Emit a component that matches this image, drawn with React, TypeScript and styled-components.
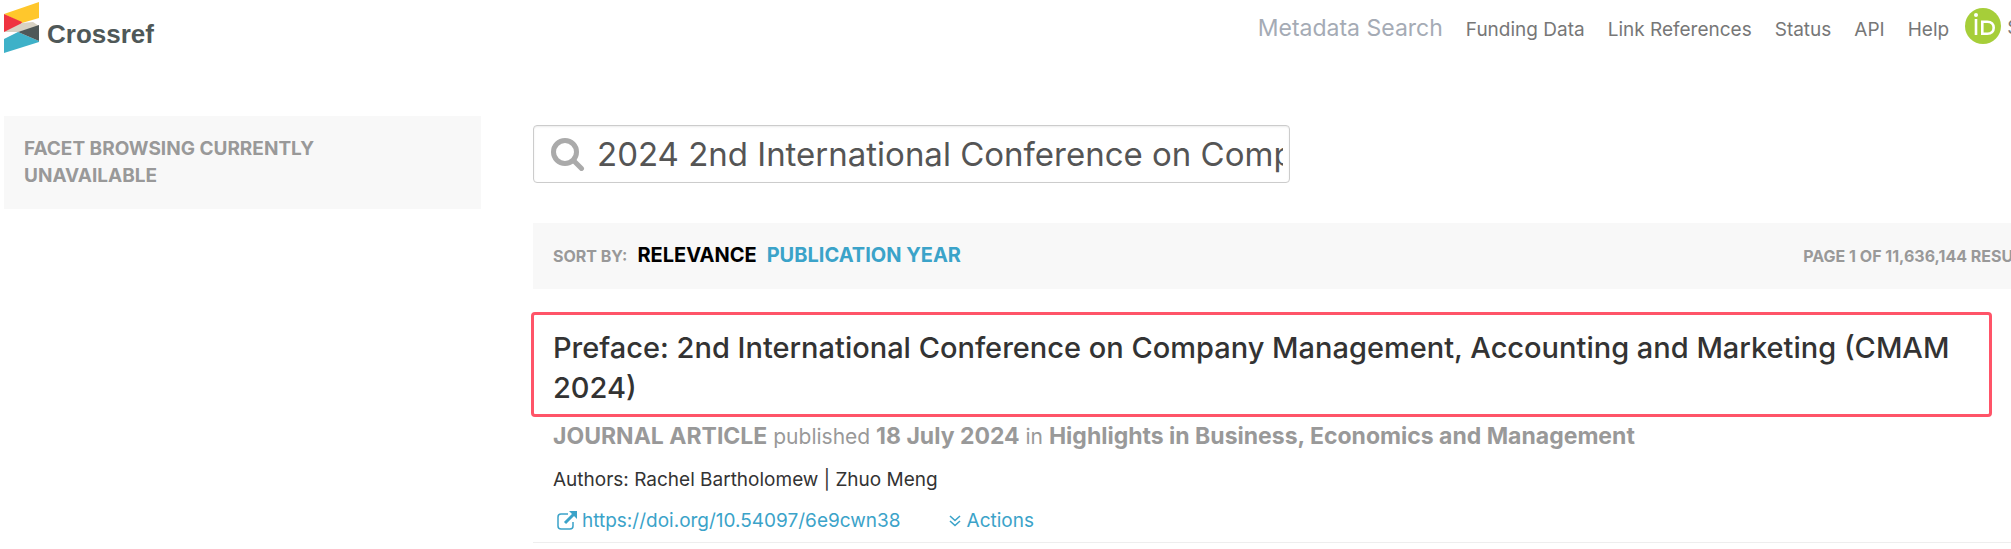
import React from "react";
import styled, { createGlobalStyle } from "styled-components";

const GlobalStyle = createGlobalStyle`
  *, *::before, *::after { box-sizing: border-box; }
  body {
    margin: 0;
    background: #fff;
    color: #333;
    font-family: Inter, "Liberation Sans", sans-serif;
    font-size: 19px;
    line-height: 26px;
    overflow-x: hidden;
  }
  a { color: inherit; text-decoration: none; }
`;

const Page = styled.div`
  padding-left: 4px;
  margin-right: -57px;
`;

const Header = styled.header`
  display: flex;
  justify-content: space-between;
  height: 116px;
`;

const Logo = styled.a`
  display: flex;
  align-items: flex-start;
  gap: 8px;
  padding-top: 2px;
  color: #4f5858;
  font: bold 26px/30px "Liberation Sans", Arial, sans-serif;
  svg { display: block; width: 35px; height: 51px; }
  span { padding-top: 17px; }
`;

const Nav = styled.nav`
  display: flex;
  align-items: baseline;
  gap: 23px;
  height: 52px;
  padding-top: 12px;
  line-height: 32px;
  color: #777;
  white-space: nowrap;
`;

const NavTitle = styled.a`
  font-size: 23px;
  color: #a5abb5;
`;

const SignIn = styled.a`
  display: flex;
  align-self: flex-start;
  align-items: flex-start;
  gap: 6px;
  margin: -4px 0 0 -7px;
  svg { width: 36px; height: 36px; }
  span { padding-top: 4px; }
`;

const Columns = styled.div`
  display: grid;
  grid-template-columns: 477px minmax(0, 1fr);
  gap: 52px;
  align-items: start;
`;

const Facets = styled.aside`
  padding: 19px 150px 20px 20px;
  background: #f8f8f8;
  color: #999;
  font-weight: 700;
  line-height: 27px;
`;

const SearchBox = styled.label`
  display: flex;
  align-items: center;
  gap: 12px;
  width: 757px;
  height: 58px;
  margin-top: 9px;
  padding: 0 6px 0 17px;
  border: 1px solid #ccc;
  border-radius: 4px;
  box-shadow: inset 0 1px 2px rgba(0, 0, 0, 0.08);
  svg { flex: none; width: 34px; height: 34px; }
`;

const SearchInput = styled.input`
  flex: 1;
  min-width: 0;
  padding: 0;
  border: 0;
  outline: 0;
  background: transparent;
  color: #555;
  font: 33px/40px Inter, sans-serif;
`;

const SortBar = styled.div`
  display: flex;
  align-items: baseline;
  gap: 10px;
  margin-top: 40px;
  padding: 19px 26px 20px 20px;
  background: #f8f8f8;
  color: #999;
  font-size: 16px;
  font-weight: 700;
  white-space: nowrap;
`;

const SortLink = styled.a<{ $active?: boolean }>`
  font-size: 20px;
  color: ${(p) => (p.$active ? "#000" : "#3ba3c9")};
`;

const PageCount = styled.span`
  margin-left: auto;
`;

const Result = styled.article`
  padding-bottom: 8px;
  border-bottom: 1px solid #eee;
`;

const Highlight = styled.div`
  margin: 23px 76px 0 -2px;
  padding: 13px 17px 6px 19px;
  border: 3px solid #ff5468;
  border-radius: 4px;
`;

const Title = styled.h2`
  margin: 0;
  font-size: 29px;
  font-weight: 500;
  line-height: 40px;
`;

const Meta = styled.p`
  margin: 0;
  padding: 6px 20px 0;
  font-size: 21px;
  line-height: 26px;
  color: #999;
  b { font-size: 23px; }
`;

const Authors = styled.p`
  margin: 0;
  padding: 17px 20px 0;
`;

const Links = styled.div`
  display: flex;
  gap: 48px;
  padding: 15px 24px 0;
  color: #3ba3c9;
`;

const IconLink = styled.a`
  display: flex;
  align-items: center;
  gap: 5px;
`;

const ActionButton = styled.button`
  display: flex;
  align-items: center;
  gap: 6px;
  padding: 0;
  border: 0;
  background: none;
  color: inherit;
  font: inherit;
`;

export default function App() {
  return (
    <>
      <GlobalStyle />
      <Page>
        <Header>
          <Logo href="#">
            <svg viewBox="0 0 35 51" aria-hidden="true">
              <path d="M0 12 35 0v16L18 21Z" fill="#ffc72c" />
              <path d="M0 12 18 20 14 30H0Z" fill="#ef3340" />
              <path d="M0 30 18 21 29 20 35 24 14 30Z" fill="#d8d2c4" />
              <path d="M0 37 14 30 35 39v1L0 51Z" fill="#3eb1c8" />
              <path d="M14 30 35 23v16Z" fill="#4f5858" />
            </svg>
            <span>Crossref</span>
          </Logo>
          <Nav>
            <NavTitle href="#">Metadata Search</NavTitle>
            <a href="#">Funding Data</a>
            <a href="#">Link References</a>
            <a href="#">Status</a>
            <a href="#">API</a>
            <a href="#">Help</a>
            <SignIn href="#">
              <svg viewBox="0 0 36 36" aria-hidden="true">
                <circle cx="18" cy="18" r="18" fill="#a6ce39" />
                <g fill="none" stroke="#fff" strokeWidth="2.6">
                  <path d="M11 11v16M17.300 13.700h5c4.200 0 6.400 2.600 6.400 6s-2.200 6-6.400 6h-5Z" />
                </g>
                <circle cx="11" cy="7" r="2" fill="#fff" />
              </svg>
              <span>Sign in</span>
            </SignIn>
          </Nav>
        </Header>
        <Columns>
          <Facets>FACET BROWSING CURRENTLY UNAVAILABLE</Facets>
          <main>
            <SearchBox>
              <svg viewBox="0 0 34 34" fill="none" stroke="#aaa" aria-hidden="true">
                <circle cx="14" cy="15" r="11.500" strokeWidth="5" />
                <path d="M22.500 23.500 30.500 31.500" strokeWidth="5" strokeLinecap="round" />
              </svg>
              <SearchInput
                aria-label="Search"
                defaultValue="2024 2nd International Conference on Company Management"
              />
            </SearchBox>
            <SortBar>
              <span>SORT BY:</span>
              <SortLink href="#" $active>RELEVANCE</SortLink>
              <SortLink href="#">PUBLICATION YEAR</SortLink>
              <PageCount>PAGE 1 OF 11,636,144 RESULTS</PageCount>
            </SortBar>
            <Result>
              <Highlight>
                <Title>
                  Preface: 2nd International Conference on Company Management, Accounting and Marketing (CMAM 2024)
                </Title>
              </Highlight>
              <Meta>
                <b>JOURNAL ARTICLE</b> published <b>18 July 2024</b> in{" "}
                <b>Highlights in Business, Economics and Management</b>
              </Meta>
              <Authors>Authors: Rachel Bartholomew | Zhuo Meng</Authors>
              <Links>
                <IconLink href="#">
                  <svg width="20" height="20" viewBox="0 0 20 20" fill="none" stroke="currentColor" aria-hidden="true">
                    <path d="M11 3H4Q1 3 1 6v9q0 3 3 3h9q3 0 3-3v-4" strokeWidth="1.500" />
                    <path d="M8 12 17 3" strokeWidth="3" />
                    <path d="M12 0h8v8Z" fill="currentColor" stroke="none" />
                  </svg>
                  https://doi.org/10.54097/6e9cwn38
                </IconLink>
                <ActionButton type="button">
                  <svg width="12" height="12" viewBox="0 0 12 12" fill="none" stroke="currentColor" strokeWidth="1.600" aria-hidden="true">
                    <path d="m1 1 5 4.500L11 1M1 6l5 4.500L11 6" />
                  </svg>
                  Actions
                </ActionButton>
              </Links>
            </Result>
          </main>
        </Columns>
      </Page>
    </>
  );
}
